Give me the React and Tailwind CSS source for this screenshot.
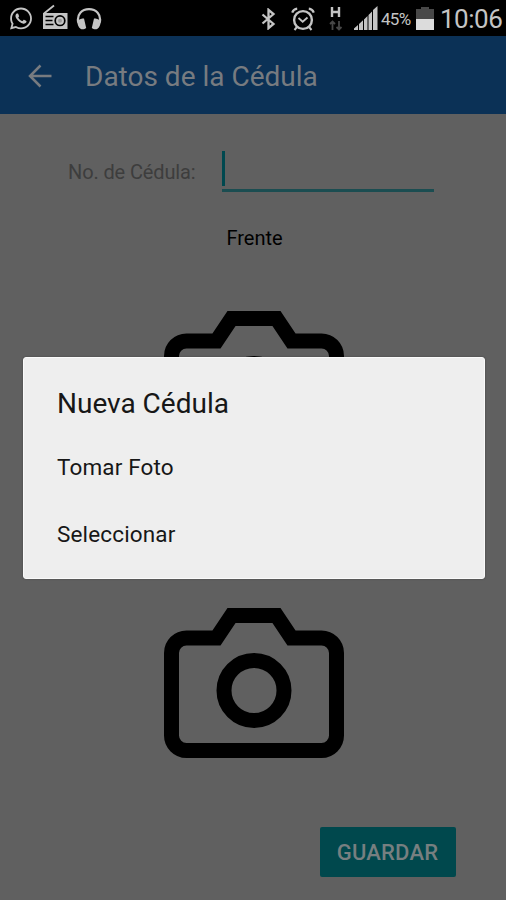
import { FaWhatsapp } from 'react-icons/fa';

const options = ['Tomar Foto', 'Seleccionar'];

function RadioIcon() {
  return (
    <svg className="w-[26px] h-[26px]" viewBox="0 0 26 26" fill="none">
      <path d="M2 9.5 12 1.5" stroke="currentColor" strokeWidth="1.8" />
      <path fill="currentColor" d="M1 9h24.500v16H1z" />
      <path d="M3.5 12.500h8M3.5 16.500h7M3.5 20.500h8" stroke="black" strokeWidth="1.500" />
      <circle cx="18" cy="16.700" r="4.800" stroke="black" strokeWidth="1.700" />
      <circle cx="18" cy="16.700" r="2" fill="#999" />
    </svg>
  );
}

function HeadphonesIcon() {
  return (
    <svg className="w-[26px] h-6" viewBox="0 0 26 24" fill="none">
      <path d="M2.2 15.5C.5 7 6 2.2 13 2.2S25.500 7 23.800 15.500" stroke="currentColor" strokeWidth="2.200" />
      <path fill="currentColor" d="M1.200 14c2-2 5-2.500 6.800-2.500l2.200 9.500c-1.500 1.300-4 1.800-5.700.800C2.500 20.500 1.200 17 1.200 14zM24.800 14c-2-2-5-2.500-6.800-2.500L15.800 21c1.500 1.300 4 1.800 5.700.800 2-1.300 3.300-4.800 3.300-7.800z" />
    </svg>
  );
}

function AlarmIcon() {
  return (
    <svg className="w-6 h-6" viewBox="0 0 24 24" fill="none" stroke="currentColor">
      <circle cx="12" cy="13" r="8.900" strokeWidth="2.400" />
      <path d="m7.500 11 4.200 3.700 4.800-4.200" strokeWidth="1.800" />
      <path d="M1.200 5.600C2 3.500 4 2 6.200 1.700M22.800 5.600C22 3.500 20 2 17.800 1.700" strokeWidth="2.200" />
      <path d="m6 20-2.500 3M18 20l2.500 3" strokeWidth="2" />
    </svg>
  );
}

function StatusBar() {
  return (
    <div className="flex h-9 items-center bg-black text-[#c4c4c4]">
      <FaWhatsapp className="ml-[8px] mt-px w-[26px] h-[25px]" />
      <div className="ml-[8px] -mt-0.5"><RadioIcon /></div>
      <div className="ml-2 mt-px"><HeadphonesIcon /></div>

      <svg className="ml-[159px] mt-[2px] w-[15px] h-[22px]" viewBox="0 0 15 22" fill="none">
        <path d="m1.500 6.500 11 9.500-5 4.200V1.800l5 4.200-11 9.500" stroke="currentColor" strokeWidth="2.300" />
      </svg>
      <div className="ml-[15px] mt-[2px]"><AlarmIcon /></div>
      <svg className="ml-[14px] -mt-px w-[14px] h-[26px]" viewBox="0 0 14 26" fill="none">
        <path d="M3 2v10M10 2v10M3 7h7" stroke="currentColor" strokeWidth="2.400" />
        <path d="M3.500 25v-8M1 19l2.500-2.500L6 19M10 16v8M7.500 22l2.500 2.500 2.500-2.500" stroke="#484848" strokeWidth="1.800" />
      </svg>
      <svg className="ml-[11px] w-[24px] h-6" viewBox="0 0 24 24" fill="currentColor">
        <path d="M0 24v-1.500l4-3.600V24zM5 24v-6l4-3.800V24zM10 24V13.500l3.500-3.500v14zM14.500 24V9l3.500-3.500V24zM19 24V4l4.500-4v24z" />
      </svg>
      <span className="ml-[3px] mt-[2px] w-8 text-[17px] tracking-[-0.7px] leading-none whitespace-nowrap">45%</span>
      <svg className="ml-[3px] mt-px w-[18px] h-[23px]" viewBox="0 0 18 23">
        <path fill="#484848" d="M5 0h8v2h5v10H0V2h5z" />
        <path fill="#dcdcdc" d="M0 12h18v11H0z" />
      </svg>
      <span className="ml-[6px] mt-0.5 text-[26px] tracking-[-0.5px] leading-none whitespace-nowrap">10:06</span>
    </div>
  );
}

function Camera({ className }) {
  return (
    <svg className={className} viewBox="0 2 24 20" fill="none" stroke="black" strokeWidth="2">
      <path d="M23 19a2 2 0 0 1-2 2H3a2 2 0 0 1-2-2V8a2 2 0 0 1 2-2h4l2-3h6l2 3h4a2 2 0 0 1 2 2z" />
      <circle cx="12" cy="13" r="4" />
    </svg>
  );
}

function Dialog() {
  return (
    <div className="absolute left-[23px] top-[357px] h-[222px] w-[462px] rounded-[3px] border border-[#fafafa] bg-[#eee] pl-[33px] text-[#171717] shadow-[0_0_2px_rgba(0,0,0,0.3)]">
      <h2 className="mt-[28px] text-[28px] leading-9">Nueva Cédula</h2>
      <ul className="mt-[12px]">
        {options.map(option => (
          <li key={option} className="flex h-[67px] items-center text-[22.500px] tracking-[0.150px]">{option}</li>
        ))}
      </ul>
    </div>
  );
}

export default function App() {
  return (
    <div className="relative flex h-[900px] w-[506px] flex-col overflow-hidden bg-[#606060] font-[Roboto,sans-serif]">
      <StatusBar />
      <header className="flex h-[78px] items-center bg-[#0b3156] text-[#777b80]">
        <svg className="ml-7 mt-0.5 w-6 h-6" viewBox="0 0 24 24" fill="none" stroke="currentColor" strokeWidth="2.500">
          <path d="M23.500 12H2M12.500 1.500 2 12l10.500 10.500" />
        </svg>
        <h1 className="ml-[33px] mt-[3px] text-[28px] leading-none">Datos de la Cédula</h1>
      </header>

      <main className="flex grow flex-col">
        <div className="mt-[37px] flex h-[41px]">
          <label className="ml-[68px] mt-[9px] w-[154px] text-[20px] leading-6 tracking-[-0.120px] text-[#3d3d3d]">No. de Cédula:</label>
          <div className="h-[41px] w-[212px] border-b-[3px] border-[#1b4d51]">
            <div className="h-[35px] w-[3px] bg-[#00484f]" />
          </div>
        </div>
        <p className="mt-[34px] pl-[3px] text-center text-[20px] leading-6 text-black">Frente</p>
        <Camera className="mt-[60.500px] ml-[163.500px] h-[150px] w-[180px] shrink-0" />
        <Camera className="mt-[147px] ml-[163.500px] h-[150px] w-[180px] shrink-0" />
        <button className="mt-[69px] ml-[319.500px] h-[50px] w-[136px] shrink-0 rounded-[2px] bg-[#00484d] pt-px text-[22px] font-medium tracking-[0.200px] text-[#777f80]">
          GUARDAR
        </button>
      </main>
      <Dialog />
    </div>
  );
}
